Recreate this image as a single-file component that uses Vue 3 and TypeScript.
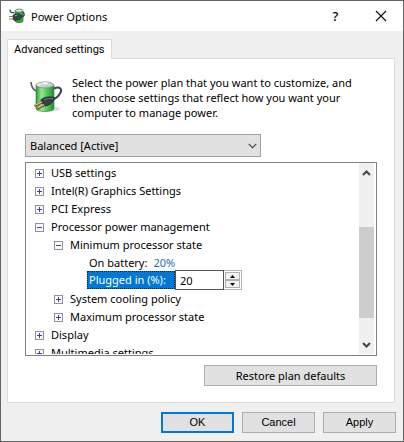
<script setup lang="ts">
import { computed, ref } from 'vue'

interface Row {
  id: string
  label: string
  level: number
  open?: boolean
  parent?: string
  kind: 'branch' | 'value' | 'edit'
}

const rows = ref<Row[]>([
  { id: 'usb', label: 'USB settings', level: 0, kind: 'branch' },
  { id: 'gfx', label: 'Intel(R) Graphics Settings', level: 0, kind: 'branch' },
  { id: 'pci', label: 'PCI Express', level: 0, kind: 'branch' },
  { id: 'cpu', label: 'Processor power management', level: 0, kind: 'branch', open: true },
  { id: 'min', label: 'Minimum processor state', level: 1, kind: 'branch', open: true, parent: 'cpu' },
  { id: 'bat', label: 'On battery:', level: 2, kind: 'value', parent: 'min' },
  { id: 'plug', label: 'Plugged in (%):', level: 2, kind: 'edit', parent: 'min' },
  { id: 'cool', label: 'System cooling policy', level: 1, kind: 'branch', parent: 'cpu' },
  { id: 'max', label: 'Maximum processor state', level: 1, kind: 'branch', parent: 'cpu' },
  { id: 'disp', label: 'Display', level: 0, kind: 'branch' },
  { id: 'media', label: 'Multimedia settings', level: 0, kind: 'branch' },
])

const plan = ref('balanced')
const pluggedIn = ref(20)

function isShown(row: Row): boolean {
  if (!row.parent) return true
  const parent = rows.value.find((r) => r.id === row.parent)
  return !!parent && !!parent.open && isShown(parent)
}

const visibleRows = computed(() => rows.value.filter(isShown))

function step(by: number) {
  pluggedIn.value = Math.min(100, Math.max(0, Number(pluggedIn.value) + by))
}
</script>

<template>
  <main class="window">
    <header class="titlebar">
      <svg class="app-icon" viewBox="0 0 16 16" aria-hidden="true">
        <path d="M6 3c0-2 8-2 8 0v10c0 2-8 2-8 0z" fill="#2fae3d" stroke="#24662c" stroke-width=".7" />
        <ellipse cx="10" cy="2.600" rx="3.600" ry="1.600" fill="#dbe8df" stroke="#4e6354" stroke-width=".6" />
        <path d="M1 1.500c0 3 2 3.500 4 3M14 4c2 2 1.500 5-2 5" fill="none" stroke="#39434b" stroke-width="1.300" />
        <path d="M4 7l5-1.500 4 2-2 4-5 1-2-1z" fill="#37434a" stroke="#1c2429" stroke-width=".5" />
        <path d="M0 8.500h4M0 11h4" stroke="#9a7d45" stroke-width="1.200" />
        <path d="M5.500 8l3-1" stroke="#9fb2ba" stroke-width=".8" />
      </svg>
      <h1 class="title">Power Options</h1>
      <button class="caption-button" type="button" aria-label="Help">?</button>
      <button class="caption-button" type="button" aria-label="Close">
        <svg class="close-icon" viewBox="0 0 12 12" aria-hidden="true">
          <path d="M1 1l10 10M11 1L1 11" fill="none" stroke="#111" stroke-width="1.200" />
        </svg>
      </button>
    </header>

    <div class="body">
      <div class="tabs" role="tablist">
        <button class="tab" type="button" role="tab" aria-selected="true">Advanced settings</button>
      </div>

      <section class="panel">
        <div class="intro">
          <svg class="plan-icon" viewBox="0 0 32 32" aria-hidden="true">
            <defs>
              <linearGradient id="cell" x1="0" x2="1" y1="0" y2="0">
                <stop offset="0" stop-color="#2b9a39" />
                <stop offset=".3" stop-color="#93e894" />
                <stop offset=".6" stop-color="#52cc5b" />
                <stop offset="1" stop-color="#258a32" />
              </linearGradient>
              <linearGradient id="cap" x1="0" x2="1" y1="0" y2="1">
                <stop offset="0" stop-color="#ffffff" />
                <stop offset="1" stop-color="#a5b3ae" />
              </linearGradient>
            </defs>
            <ellipse cx="19" cy="28" rx="11" ry="2.500" fill="#dedede" />
            <path d="M6 4v23.500c0 4 18 4 18 0V4z" fill="url(#cell)" stroke="#278335" stroke-width=".6" />
            <ellipse cx="15" cy="4" rx="9" ry="3" fill="url(#cap)" stroke="#71887a" stroke-width=".7" />
            <ellipse cx="15" cy="2.400" rx="3.500" ry="1.600" fill="#f7faf9" stroke="#a2afaa" stroke-width=".6" />
            <path d="M1 1c.3 5 2 7.500 5 9" fill="none" stroke="#596066" stroke-width="1.700" />
            <path d="M24 7.500c6-2.500 8 .5 6.500 4-1.500 3-3.500 5.500-7 6.500" fill="none" stroke="#3e4357" stroke-width="2" />
            <path d="M11 18.500c4-3 10-3.500 14-1.500-1.500 4-5 7.500-10 8l-4-3z" fill="#373d43" stroke="#23282c" stroke-width=".7" />
            <path d="M14 19c3-1.500 6-2 9-1.200" fill="none" stroke="#6f7980" />
            <path d="M12 21.500l-7.500 3.500M14.500 24l-7 3.500" fill="none" stroke="#79512c" stroke-width="2.400" />
            <path d="M12 21l-7 3.200M14 23.500l-6.500 3.200" fill="none" stroke="#e9c895" stroke-width="1.100" />
          </svg>
          <p class="intro-text">
            Select the power plan that you want to customize, and then choose settings that reflect how you want your
            computer to manage power.
          </p>
        </div>

        <div class="plan">
          <select v-model="plan" class="plan-select" aria-label="Power plan">
            <option value="balanced">Balanced [Active]</option>
          </select>
          <svg class="chevron plan-chevron" viewBox="0 0 9 6" aria-hidden="true">
            <path d="M.7 .8l3.800 3.800L8.300 .8" fill="none" stroke="#444" stroke-width="1.200" />
          </svg>
        </div>

        <div class="tree">
          <ul class="rows" role="tree">
            <li v-for="row in visibleRows" :key="row.id" class="row" :class="'level-' + row.level" role="treeitem">
              <template v-if="row.kind === 'branch'">
                <button
                  class="toggle"
                  type="button"
                  :aria-label="row.label"
                  :aria-expanded="!!row.open"
                  @click="row.open = !row.open"
                >
                  <svg class="toggle-icon" viewBox="0 0 9 9" aria-hidden="true">
                    <rect x=".5" y=".5" width="8" height="8" fill="#fbfbfb" stroke="#929292" />
                    <path d="M2 4.500h5" stroke="#34479a" />
                    <path v-if="!row.open" d="M4.500 2v5" stroke="#34479a" />
                  </svg>
                </button>
                <span>{{ row.label }}</span>
              </template>
              <template v-else-if="row.kind === 'value'">
                <span class="setting">{{ row.label }}</span>
                <a class="value" href="#battery">20%</a>
              </template>
              <template v-else>
                <label class="setting selected" for="plugged-in">{{ row.label }}</label>
                <input id="plugged-in" v-model="pluggedIn" class="number" type="text" inputmode="numeric" />
                <span class="spinner">
                  <button class="spin" type="button" aria-label="Increase" @click="step(1)">
                    <svg class="arrow" viewBox="0 0 5 3" aria-hidden="true"><path d="M0 3L2.500 0 5 3z" /></svg>
                  </button>
                  <button class="spin" type="button" aria-label="Decrease" @click="step(-1)">
                    <svg class="arrow" viewBox="0 0 5 3" aria-hidden="true"><path d="M0 0h5L2.500 3z" /></svg>
                  </button>
                </span>
              </template>
            </li>
          </ul>
          <div class="scrollbar" aria-hidden="true">
            <svg class="chevron" viewBox="0 0 9 6">
              <path d="M1 5l3.500-3.500L8 5" fill="none" stroke="#444" stroke-width="2" />
            </svg>
            <div class="track"><div class="thumb"></div></div>
            <svg class="chevron" viewBox="0 0 9 6">
              <path d="M1 1l3.500 3.500L8 1" fill="none" stroke="#444" stroke-width="2" />
            </svg>
          </div>
        </div>

        <button class="button restore" type="button">Restore plan defaults</button>
      </section>

      <footer class="actions">
        <button class="button dialog-button default" type="button">OK</button>
        <button class="button dialog-button" type="button">Cancel</button>
        <button class="button dialog-button" type="button">Apply</button>
      </footer>
    </div>
  </main>
</template>

<style>
body {
  margin: 0;
}
</style>

<style scoped>
.window {
  box-sizing: border-box;
  display: flex;
  flex-direction: column;
  height: 100vh;
  min-height: 360px;
  border: 1px solid #656565;
  background: #f0f0f0;
  color: #000;
  font-family: 'Noto Sans', 'Open Sans', sans-serif;
  font-size: 11px;
  line-height: 15px;
}

button,
input,
select {
  box-sizing: border-box;
  margin: 0;
  border-radius: 0;
  color: inherit;
  font: inherit;
}

.titlebar {
  display: flex;
  align-items: center;
  flex: none;
  height: 30px;
  padding-left: 8px;
  background: #fff;
}

.app-icon {
  width: 16px;
  height: 16px;
  margin-right: 6px;
}

.title {
  flex: 1;
  margin: 0;
  font-size: 11px;
  font-weight: 400;
}

.caption-button {
  display: flex;
  align-items: center;
  justify-content: center;
  width: 45px;
  height: 28px;
  padding: 0;
  border: 0;
  background: none;
  font-size: 13px;
  font-weight: 500;
}

.close-icon {
  width: 12px;
  height: 12px;
}

.body {
  display: flex;
  flex: 1;
  flex-direction: column;
  min-height: 0;
  padding: 8px 7px 8px 6px;
}

.tabs {
  display: flex;
  flex: none;
  z-index: 1;
}

.tab {
  height: 20px;
  margin-bottom: -1px;
  padding: 0 6px;
  border: 1px solid #dcdcdc;
  border-bottom: 0;
  background: #fff;
  font-family: Roboto, sans-serif;
}

.panel {
  display: flex;
  flex: 1;
  flex-direction: column;
  min-height: 0;
  margin-right: 1px;
  padding: 16px 17px;
  border: 1px solid #dcdcdc;
  background: #fff;
}

.intro {
  display: flex;
  gap: 10px;
  padding-left: 5px;
}

.plan-icon {
  flex: none;
  width: 32px;
  height: 32px;
  margin-top: 6px;
}

.intro-text {
  max-width: 300px;
  margin: 0;
}

.plan {
  display: grid;
  align-items: center;
  flex: none;
  width: 67%;
  margin-top: 14px;
}

.plan-select {
  grid-area: 1 / 1;
  width: 100%;
  height: 23px;
  padding: 0 4px;
  border: 1px solid #a0a0a0;
  appearance: none;
  background: #e1e1e1;
}

.chevron {
  flex: none;
  width: 9px;
  height: 6px;
}

.plan-chevron {
  grid-area: 1 / 1;
  justify-self: end;
  margin-right: 4px;
  pointer-events: none;
}

.tree {
  display: flex;
  flex: 1;
  min-height: 0;
  margin-top: 5px;
  padding: 0 2px 1px 1px;
  border: 1px solid #7d828a;
}

.rows {
  flex: 1;
  margin: 0;
  padding: 0;
  overflow: hidden;
  list-style: none;
}

.row {
  display: flex;
  align-items: center;
  height: 18px;
  padding-left: 8px;
  white-space: nowrap;
}

.level-1 {
  padding-left: 27px;
}

.level-2 {
  padding-left: 60px;
}

.toggle {
  display: flex;
  margin: 2px 7px 0 0;
  padding: 0;
  border: 0;
  background: none;
}

.toggle-icon {
  width: 9px;
  height: 9px;
}

.setting {
  padding: 0 2px;
}

.value {
  margin-left: 4px;
  color: #1f6fba;
  text-decoration: none;
}

.selected {
  box-sizing: border-box;
  width: 88px;
  height: 18px;
  outline: 1px dotted #222;
  outline-offset: -1px;
  background: #0078d7;
  color: #fff;
  line-height: 18px;
}

.number {
  width: 49px;
  height: 20px;
  padding: 0 4px;
  border: 1px solid #555;
  background: #fff;
}

.spinner {
  display: flex;
  flex-direction: column;
  box-sizing: border-box;
  width: 18px;
  height: 20px;
  padding: 1px;
  border: 1px solid #b5b5b5;
  border-left: 0;
}

.spin {
  display: flex;
  align-items: center;
  justify-content: center;
  flex: 1;
  min-height: 0;
  padding: 0;
  border: 1px solid #b0b0b0;
  background: #f2f2f2;
}

.arrow {
  width: 5px;
  height: 3px;
}

.scrollbar {
  display: flex;
  flex: none;
  flex-direction: column;
  align-items: center;
  width: 15px;
  padding: 7px 0 6px;
  background: #f0f0f0;
}

.track {
  display: flex;
  flex: 1;
  flex-direction: column;
  justify-content: flex-end;
  width: 100%;
  padding: 6px 0 24px;
}

.thumb {
  height: 67%;
  background: #cdcdcd;
}

.button {
  height: 21px;
  padding: 0;
  border: 1px solid #adadad;
  background: #e1e1e1;
}

.restore {
  flex: none;
  align-self: flex-end;
  width: 173px;
  margin-top: 9px;
}

.actions {
  display: flex;
  flex: none;
  justify-content: flex-end;
  gap: 8px;
  margin-top: 9px;
}

.dialog-button {
  width: 73px;
  font-family: 'Liberation Sans', sans-serif;
}

.default {
  border: 2px solid #0078d7;
}
</style>
